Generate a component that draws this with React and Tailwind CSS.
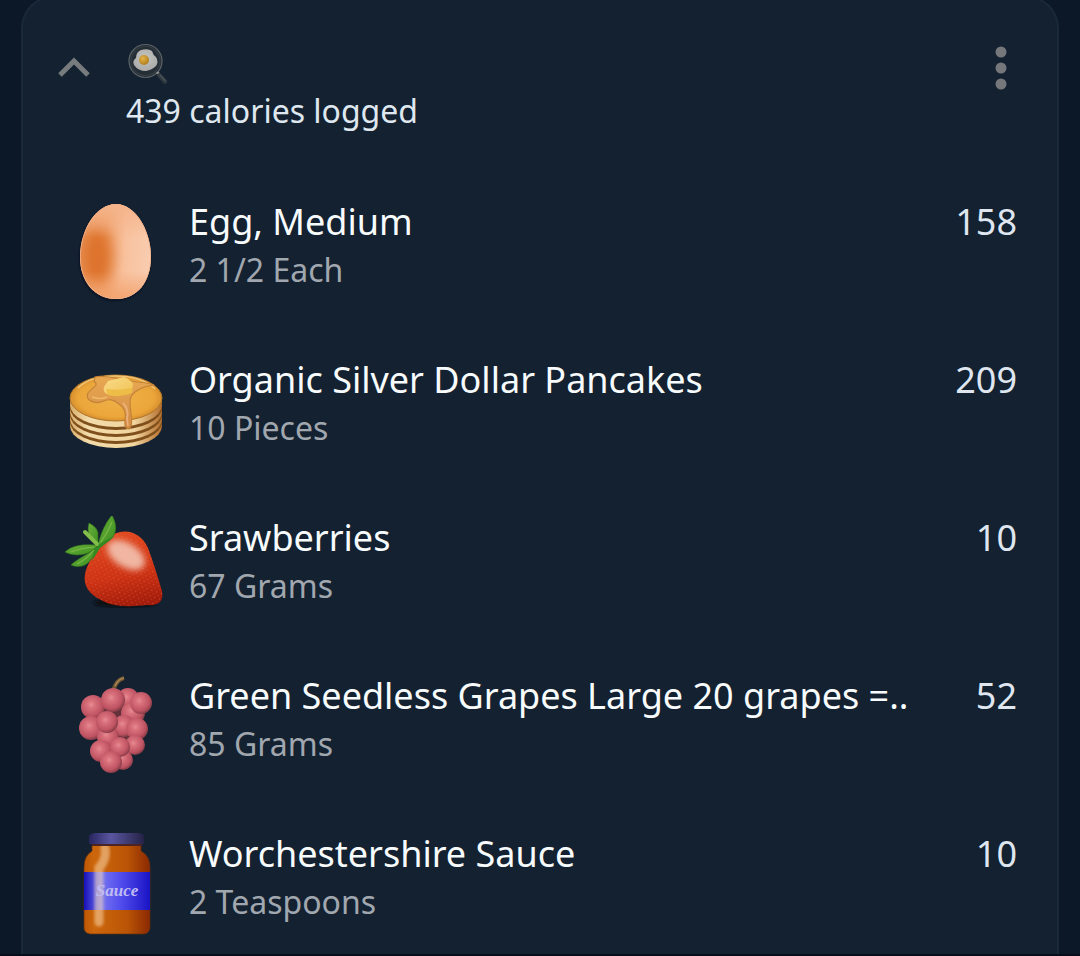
import React from "react";

function PanIcon() {
  return (
    <svg className="block size-[42px]" viewBox="0 0 42 42" role="img" aria-label="Breakfast">
      <defs>
        <radialGradient id="yolk" cx=".4" cy=".35" r=".65">
          <stop offset="0" stopColor="#e2b548" />
          <stop offset="1" stopColor="#b37d1c" />
        </radialGradient>
        <radialGradient id="white" cx=".5" cy=".4" r=".65">
          <stop offset="0" stopColor="#c4c3be" />
          <stop offset="1" stopColor="#a8a9a9" />
        </radialGradient>
      </defs>
      <path d="M31 32 37 38.500" stroke="#30393f" strokeWidth="4.500" strokeLinecap="round" />
      <path d="M32 32 37 37.500" stroke="#4b545a" strokeWidth="1.400" strokeLinecap="round" />
      <circle cx="17.500" cy="18" r="16.500" fill="#252d35" stroke="#5d6468" strokeWidth="1.200" />
      <circle cx="17.500" cy="18" r="14.500" fill="none" stroke="#343c44" strokeWidth="1.200" />
      <path d="M28.500 30.500 31 29" stroke="#98978d" strokeWidth="1.800" />
      <path d="M13 7Q20 5 24 8Q25 12 28 14Q31 19 28 23Q24 27 18 28Q10 28 6 22Q4 18 8 15Q8 9 13 7Z" fill="url(#white)" />
      <circle cx="16" cy="17" r="5" fill="url(#yolk)" />
    </svg>
  );
}

function EggIcon() {
  return (
    <svg className="block size-[104px]" viewBox="0 0 104 104" aria-hidden="true">
      <defs>
        <linearGradient id="shell" x1="0" x2="1" y1=".4" y2=".5">
          <stop offset="0" stopColor="#e9955d" />
          <stop offset=".35" stopColor="#efa06a" />
          <stop offset=".62" stopColor="#f8c19d" />
          <stop offset="1" stopColor="#f9ccb0" />
        </linearGradient>
        <linearGradient id="shellRim" x1="0" x2="0" y1="0" y2="1">
          <stop offset="0" stopColor="#f5b48b" />
          <stop offset=".35" stopColor="#f5b48b" stopOpacity="0" />
          <stop offset=".7" stopColor="#f3a36e" stopOpacity="0" />
          <stop offset="1" stopColor="#f3a36e" />
        </linearGradient>
        <filter id="shellBlur" x="-60%" y="-50%" width="220%" height="200%"><feGaussianBlur stdDeviation="7" /></filter>
        <filter id="eggShadow"><feGaussianBlur stdDeviation="1.5" /></filter>
        <clipPath id="eggClip"><path d="M52 4C71 4 87 30 87 57C87 82 73 99 52 99C31 99 16 82 16 57C16 30 32 4 52 4Z" /></clipPath>
      </defs>
      <path d="M51 6C70 6 86 31 86 58C86 83 72 100 51 100C30 100 16 83 16 58C16 31 32 6 51 6Z" fill="#0b1118" filter="url(#eggShadow)" />
      <g clipPath="url(#eggClip)">
        <path d="M16 4h71v96H16z" fill="url(#shell)" />
        <ellipse cx="33" cy="57" rx="15" ry="31" fill="#dd722b" filter="url(#shellBlur)" />
        <path d="M16 4h71v96H16z" fill="url(#shellRim)" />
        <path d="M52 4C71 4 87 30 87 57C87 82 73 99 52 99C31 99 16 82 16 57C16 30 32 4 52 4Z" fill="none" stroke="#f4b38a" strokeWidth="1.500" />
      </g>
    </svg>
  );
}

const pancakeLayers = [68, 61, 54, 47];

function PancakesIcon() {
  return (
    <svg className="block size-[104px]" viewBox="0 0 104 104" aria-hidden="true">
      <defs>
        <radialGradient id="cakeTop" cx=".5" cy=".5" r=".55">
          <stop offset="0" stopColor="#efb148" />
          <stop offset=".75" stopColor="#eba63a" />
          <stop offset="1" stopColor="#cc8226" />
        </radialGradient>
        <linearGradient id="cakeSide" x1="0" x2="1" y1="0" y2="0">
          <stop offset="0" stopColor="#d9ad6b" />
          <stop offset=".2" stopColor="#f3dcab" />
          <stop offset=".7" stopColor="#f1d59e" />
          <stop offset="1" stopColor="#b5702f" />
        </linearGradient>
        <linearGradient id="butter" x1="0" x2="1" y1="0" y2="1">
          <stop offset="0" stopColor="#fbdc8c" />
          <stop offset="1" stopColor="#efc151" />
        </linearGradient>
        <linearGradient id="syrup" x1="0" x2="0" y1="0" y2="1">
          <stop offset="0" stopColor="#e8a951" />
          <stop offset="1" stopColor="#d38a48" />
        </linearGradient>
      </defs>
      {pancakeLayers.map((cy) => (
        <g key={cy}>
          <ellipse cx="52" cy={cy} rx="46" ry="22" fill="url(#cakeSide)" />
          <ellipse cx="52" cy={cy - 4} rx="46" ry="22" fill="#80501c" />
        </g>
      ))}
      <ellipse cx="52" cy="43" rx="46" ry="25" fill="url(#cakeSide)" />
      <ellipse cx="52" cy="40" rx="46" ry="23" fill="url(#cakeTop)" stroke="#ad7428" strokeWidth="1" />
      <path d="M14 30C24 20 37 18 51 18C68 18 81 21 91 31" fill="none" stroke="#efc577" strokeWidth="1.500" />
      <path d="M31 19C39 17 49 20 57 21L73 24Q85 25 90 27C82 28 76 30 71 34C66 38 66 41 66 46L67 56Q69 67 65 71Q60 70 61 62Q63 51 55 46C49 41 45 41 40 43C31 47 20 42 24 35C28 29 36 28 30 23Z" fill="url(#syrup)" stroke="#c38337" strokeWidth="1.200" />
      <path d="M44 23 60 19Q67 22 69 26L68 34Q56 39 45 37Q38 34 40 29Z" fill="url(#butter)" />
      <path d="M42 31Q54 33 68 30V35Q56 40 44 37Z" fill="#edbd47" />
      <path d="M59 45Q65 51 63 60L64 68" fill="none" stroke="#ecb179" strokeWidth="1.800" />
      <path d="M28 39Q36 42 43 39" fill="none" stroke="#efb965" strokeWidth="1.500" />
    </svg>
  );
}

function StrawberryIcon() {
  return (
    <svg className="block size-[104px]" viewBox="0 0 104 104" aria-hidden="true">
      <defs>
        <linearGradient id="berry" x1=".4" x2=".6" y1="0" y2="1">
          <stop offset="0" stopColor="#e24a20" />
          <stop offset=".6" stopColor="#cd3214" />
          <stop offset="1" stopColor="#a21b0b" />
        </linearGradient>
        <linearGradient id="leaf" x1="0" x2="1" y1="0" y2="1">
          <stop offset="0" stopColor="#6db13a" />
          <stop offset="1" stopColor="#3b8f20" />
        </linearGradient>
        <pattern id="seeds" width="5" height="6" patternUnits="userSpaceOnUse" patternTransform="rotate(18)">
          <circle cx="1.500" cy="1.500" r=".7" fill="#e77b4c" />
          <circle cx="4" cy="4.500" r=".6" fill="#e77b4c" />
        </pattern>
        <filter id="shine" x="-40%" y="-60%" width="180%" height="220%"><feGaussianBlur stdDeviation="3" /></filter>
        <filter id="berryShadow"><feGaussianBlur stdDeviation="1.5" /></filter>
      </defs>
      <ellipse cx="61" cy="87" rx="32" ry="4" fill="#070b10" filter="url(#berryShadow)" />
      <path d="M42 24C56 10 76 14 84 32Q91 51 98 75C100 86 94 90 83 89C65 91 49 91 37 84C19 75 18 62 24 49Q30 33 42 24Z" fill="url(#berry)" />
      <path d="M42 24C56 10 76 14 84 32Q91 51 98 75C100 86 94 90 83 89C65 91 49 91 37 84C19 75 18 62 24 49Q30 33 42 24Z" fill="url(#seeds)" opacity=".5" />
      <ellipse cx="62" cy="39" rx="21" ry="12" transform="rotate(32 62 39)" fill="#f0b6a2" filter="url(#shine)" />
      <g fill="url(#leaf)" stroke="#2f711d" strokeWidth=".6">
        <path d="M32 29C20 28 8 29 1 36C10 41 24 40 33 31Z" />
        <path d="M33 31C23 39 13 43 7 49C17 53 27 50 33 31Z" />
        <path d="M32 29C24 21 23 14 25 7Q33 11 34 17L34 27Z" />
        <path d="M35 25Q39 10 48 -1Q56 14 47 23Q41 29 34 29Z" />
      </g>
      <path d="M30 33Q41 23 51 20L36 32L28 45Z" fill="#348822" />
      <path d="M21 16 33 28" stroke="#82bd4a" strokeWidth="4" strokeLinecap="round" />
      <path d="M37 26Q44 16 48 6M30 31Q17 32 7 36M30 34Q22 44 13 48" fill="none" stroke="#7cb849" strokeWidth="1.200" />
    </svg>
  );
}

const grapes = [
  [63, 17, 11], [68, 31, 12], [76, 21, 11], [28, 25, 12], [59, 44, 11],
  [26, 46, 12], [72, 47, 11], [43, 55, 11], [70, 63, 10], [36, 69, 11],
  [58, 78, 10], [48, 18, 12], [42, 40, 11], [55, 65, 10], [46, 80, 11],
];

function GrapesIcon() {
  return (
    <svg className="block size-[104px]" viewBox="0 0 104 104" aria-hidden="true">
      <defs>
        <radialGradient id="grape" cx=".42" cy=".4" r=".62">
          <stop offset="0" stopColor="#e68b92" />
          <stop offset=".25" stopColor="#d9717c" />
          <stop offset=".75" stopColor="#be5362" />
          <stop offset="1" stopColor="#823a45" />
        </radialGradient>
      </defs>
      <path d="M49 17Q52 6 60 4" fill="none" stroke="#715731" strokeWidth="4" />
      <path d="M51 12Q54 5 60 4" fill="none" stroke="#a78753" strokeWidth="1.500" />
      <path d="M34 34h34v35H42z" fill="#62313a" />
      {grapes.map(([x, y, r]) => <circle key={`${x}-${y}`} cx={x + 1} cy={y + 8} r={r} fill="url(#grape)" />)}
    </svg>
  );
}

function SauceIcon() {
  return (
    <svg className="block size-[104px]" viewBox="0 0 104 104" aria-hidden="true">
      <defs>
        <linearGradient id="jar" x1="0" x2="1" y1="0" y2="0">
          <stop offset="0" stopColor="#bd5605" />
          <stop offset=".15" stopColor="#cc670c" />
          <stop offset=".65" stopColor="#bb5506" />
          <stop offset="1" stopColor="#8b2902" />
        </linearGradient>
        <linearGradient id="label" x1="0" x2="1" y1="0" y2="0">
          <stop offset="0" stopColor="#1510b9" />
          <stop offset=".25" stopColor="#7775ee" />
          <stop offset=".55" stopColor="#514eee" />
          <stop offset="1" stopColor="#1a13c5" />
        </linearGradient>
        <linearGradient id="lid" x1="0" x2="1" y1="0" y2="0">
          <stop offset="0" stopColor="#28255f" />
          <stop offset=".4" stopColor="#5956a1" />
          <stop offset="1" stopColor="#252246" />
        </linearGradient>
        <filter id="glare" x="-80%" y="-20%" width="260%" height="140%"><feGaussianBlur stdDeviation="1.7" /></filter>
      </defs>
      <path d="M28 12H77V19Q86 24 86 35V96Q85 102 79 102H26Q20 101 20 96V35Q20 24 28 19Z" fill="url(#jar)" stroke="#64300e" strokeWidth=".7" />
      <path d="M20 40H86V78H20Z" fill="url(#label)" />
      <path d="M41 16Q43 27 35 36V90" fill="none" stroke="#ffe1b8" strokeWidth="9" strokeLinecap="round" opacity=".5" filter="url(#glare)" />
      <path d="M25 5Q26 1 32 1H73Q80 1 80 5V12H25Z" fill="url(#lid)" />
      <path d="M28 13H78" stroke="#4b2423" strokeWidth="2" />
      <text x="53" y="64" textAnchor="middle" fontFamily="Liberation Serif, serif" fontStyle="italic" fontWeight="bold" fontSize="17" fill="#c0bcf3">Sauce</text>
    </svg>
  );
}

const foods = [
  { name: "Egg, Medium", amount: "2 1/2 Each", calories: 158, Icon: EggIcon },
  { name: "Organic Silver Dollar Pancakes", amount: "10 Pieces", calories: 209, Icon: PancakesIcon },
  { name: "Srawberries", amount: "67 Grams", calories: 10, Icon: StrawberryIcon },
  { name: "Green Seedless Grapes Large 20 grapes =..", amount: "85 Grams", calories: 52, Icon: GrapesIcon },
  { name: "Worchestershire Sauce", amount: "2 Teaspoons", calories: 10, Icon: SauceIcon },
];

export default function App() {
  return (
    <main className="flex min-h-screen flex-col overflow-hidden border-b-2 border-[#080d1b] bg-[#0c1828] px-[21px] font-['Noto_Sans',sans-serif]">
      <section className="-mt-1 grow rounded-t-[32px] border-x-2 border-t-2 border-[#192938] bg-[#132131] pr-10 pb-4 pl-[35px]">
        <header className="flex items-start pt-[45px]">
          <button type="button" aria-label="Collapse meal" className="flex h-12 w-8 shrink-0 items-center justify-center">
            <svg className="block h-5 w-8" viewBox="0 0 32 20" fill="none" aria-hidden="true">
              <path d="M2 18 16 4 30 18" stroke="#777b7e" strokeWidth="5" />
            </svg>
          </button>
          <div className="min-w-0 grow pl-9">
            <div className="pl-0.5"><PanIcon /></div>
            <p className="mt-0.5 text-[32px] leading-[48px] text-[#dfe7ef]">439 calories logged</p>
          </div>
          <button type="button" aria-label="More options" className="flex h-[50px] w-8 shrink-0 items-center justify-center">
            <svg className="block h-11 w-3" viewBox="0 0 12 44" fill="#75777a" aria-hidden="true">
              <circle cx="6" cy="6" r="5.500" />
              <circle cx="6" cy="22" r="5.500" />
              <circle cx="6" cy="38" r="5.500" />
            </svg>
          </button>
        </header>
        <ul className="mt-[63px] flex flex-col gap-[52px]">
          {foods.map(({ name, amount, calories, Icon }) => (
            <li key={name} className="flex items-start pl-1.5">
              <div className="shrink-0 pt-0.5"><Icon /></div>
              <div className="min-w-0 grow pl-[21px]">
                <h2 className="truncate text-[36px] leading-[48px] text-[#f8fbfc]">{name}</h2>
                <p className="text-[32px] leading-[48px] text-[#a1a7ae]">{amount}</p>
              </div>
              <span className="shrink-0 pl-6 text-[36px] leading-[48px] text-[#dfe6ef]">{calories}</span>
            </li>
          ))}
        </ul>
      </section>
    </main>
  );
}
